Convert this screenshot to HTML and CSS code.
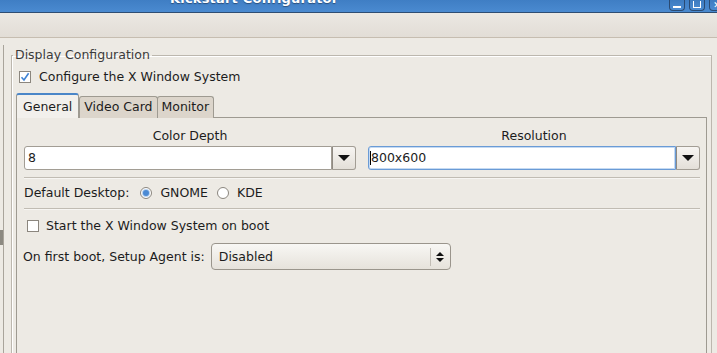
FILE: index.html
```html
<!DOCTYPE html>
<html lang="en">
<head>
  <meta charset="UTF-8">
  <title>Kickstart Configurator</title>
  <link rel="stylesheet" href="styles.css">
</head>
<body>
  <div class="titlebar">
    <span class="title">Kickstart Configurator</span>
    <div class="wm-buttons">
      <span class="wm-btn"><span class="wm-min"></span></span>
      <span class="wm-btn"><span class="wm-max"></span></span>
      <span class="wm-btn"><span class="wm-close">&#x2715;</span></span>
    </div>
  </div>
  <div class="toolbar"></div>

  <div class="main">
    <div class="sidepane"><div class="thumb"></div></div>

    <fieldset class="frame">
      <legend>Display Configuration</legend>

      <label class="check first">
        <span class="box">
          <svg width="10" height="10" viewBox="0 0 10 10"><path d="M1.5 5.2 L4 8 L8.6 1.2" fill="none" stroke="#3f83d4" stroke-width="1.6"/></svg>
        </span>
        Configure the X Window System
      </label>

      <div class="notebook">
        <div class="tabs">
          <div class="tab active">General</div>
          <div class="tab">Video Card</div>
          <div class="tab">Monitor</div>
        </div>

        <div class="page">
          <div class="combo-row">
            <div class="field">
              <div class="field-label">Color Depth</div>
              <div class="combo">
                <span class="combo-entry">8</span>
                <span class="combo-btn"><span class="arrow-down"></span></span>
              </div>
            </div>
            <div class="field">
              <div class="field-label">Resolution</div>
              <div class="combo focused">
                <span class="combo-entry"><span class="caret"></span>800x600</span>
                <span class="combo-btn"><span class="arrow-down"></span></span>
              </div>
            </div>
          </div>

          <div class="sep"></div>

          <div class="desktop-row">
            <span>Default Desktop:</span>
            <label class="radio"><span class="dot on"></span>GNOME</label>
            <label class="radio"><span class="dot"></span>KDE</label>
          </div>

          <div class="sep"></div>

          <label class="check boot">
            <span class="box"></span>
            Start the X Window System on boot
          </label>

          <div class="agent-row">
            <span>On first boot, Setup Agent is:</span>
            <div class="select">
              <span class="select-text">Disabled</span>
              <span class="select-arrows">
                <span class="arrow-up"></span>
                <span class="arrow-down small"></span>
              </span>
            </div>
          </div>
        </div>
      </div>
    </fieldset>
  </div>
</body>
</html>
```

FILE: styles.css
```css
* { box-sizing: border-box; }
html, body { height: 100%; }
body {
  margin: 0;
  overflow: hidden;
  background: #edeae4;
  color: #1c1c1c;
  font-family: "DejaVu Sans", "Liberation Sans", sans-serif;
  font-size: 12.5px;
  line-height: 16px;
  display: flex;
  flex-direction: column;
}

/* window chrome */
.titlebar {
  height: 13px;
  flex: none;
  display: flex;
  align-items: flex-start;
  padding-left: 170px;
  background: linear-gradient(to bottom, #3f7ec4, #4a8ad0);
  border-bottom: 1px solid #2d4d73;
  overflow: hidden;
}
.title {
  margin-top: -9px;
  font-weight: bold;
  font-size: 13px;
  color: #fff;
  text-shadow: 0 1px 1px #2a4f7c;
  letter-spacing: 0.2px;
}
.wm-buttons {
  margin-left: auto;
  margin-right: -8px;
  display: flex;
  gap: 4px;
}
.wm-btn {
  width: 16px; height: 11px;
  border: 1px solid #2a4a72;
  border-top: none;
  border-radius: 0 0 4px 4px;
  background: linear-gradient(to bottom, #3d7bc0, #4b8bd1);
  display: flex; align-items: center; justify-content: center;
  color: #fff;
}
.wm-min { width: 8px; height: 2px; background: #fff; margin-top: 3px; }
.wm-max { width: 8px; height: 7px; border: 1px solid #fff; border-top: none; margin-top: -2px; }
.wm-close { font-size: 9px; line-height: 9px; font-weight: bold; }

.toolbar {
  height: 25px;
  flex: none;
  background: linear-gradient(to bottom, #ebe8e3, #e2ddd6);
  border-bottom: 1px solid #c6bdb0;
}

.main {
  flex: 1;
  display: flex;
  align-items: stretch;
  min-height: 0;
}
.sidepane {
  width: 4px;
  margin-top: 7px;
  margin-right: 7px;
  border-right: 1px solid #a9a49b;
}
.thumb {
  margin-top: 185px;
  height: 15px;
  width: 3px;
  background: #8c8981;
}

/* frame */
.frame {
  flex: 1;
  margin: 9px 5px -20px 0;
  padding: 0 4px;
  border: 1px solid #bcb7ae;
  box-shadow: inset 1px 1px 0 #fff;
  min-width: 0;
  display: flex;
  flex-direction: column;
}
.frame legend {
  padding: 0 2px;
  margin-left: -3px;
  color: #3b3b3b;
}

.check {
  display: flex;
  align-items: center;
  gap: 7px;
}
.check.first { margin: 6px 0 0 3px; gap: 8px; }
.box {
  width: 12px; height: 12px;
  border: 1px solid #8b867e;
  background: #fff;
  display: flex; align-items: center; justify-content: center;
}

/* notebook */
.notebook {
  margin-top: 8px;
  flex: 1;
  display: flex;
  flex-direction: column;
}
.tabs {
  display: flex;
  align-items: flex-end;
  position: relative;
  z-index: 1;
  margin-bottom: -1px;
}
.tab {
  height: 22px;
  padding: 2px 4px 0 4px;
  background: #dcd5cb;
  border: 1px solid #9e9a91;
  border-bottom: none;
  border-radius: 3px 3px 0 0;
  margin-right: -1px;
}
.tab.active {
  height: 25px;
  padding: 4px 6px 0 6px;
  background: #f2f0ec;
  border-top: 2px solid #4a86c8;
  margin-right: 0;
}
.page {
  flex: 1;
  background: #edeae4;
  border: 1px solid #9e9a91;
  padding: 10px 6px 0 7px;
}

.combo-row {
  display: flex;
  gap: 12px;
}
.field { flex: 1; }
.field-label {
  text-align: center;
  margin-bottom: 2px;
}
.combo {
  display: flex;
  height: 24px;
}
.combo-entry {
  flex: 1;
  background: #fff;
  border: 1px solid #a29d94;
  border-radius: 3px 0 0 3px;
  padding: 3px 3px;
  display: flex;
  align-items: center;
}
.combo.focused .combo-entry {
  border-color: #6a9bd6;
  box-shadow: inset 0 0 0 1px #c5daf2;
  padding-left: 1px;
}
.caret {
  width: 1px; height: 14px;
  background: #000;
}
.combo-btn {
  width: 24px;
  border: 1px solid #a29d94;
  border-left: 1px solid #8f8a82;
  border-radius: 0 3px 3px 0;
  background: linear-gradient(to bottom, #f7f5f2, #e3dfd8);
  display: flex; align-items: center; justify-content: center;
}
.arrow-down {
  width: 0; height: 0;
  border-left: 6px solid transparent;
  border-right: 6px solid transparent;
  border-top: 6px solid #111;
}
.arrow-down.small { border-left-width: 4px; border-right-width: 4px; border-top-width: 4px; }
.arrow-up {
  width: 0; height: 0;
  border-left: 4px solid transparent;
  border-right: 4px solid transparent;
  border-bottom: 4px solid #111;
}

.sep {
  border-top: 1px solid #c1bcb3;
  border-bottom: 1px solid #f7f5f2;
  margin: 7px 0 0;
}

.desktop-row {
  display: flex;
  align-items: center;
  gap: 11px;
  margin: 6px 0 7px;
}
.radio {
  display: flex;
  align-items: center;
  gap: 8px;
}
.desktop-row .radio + .radio { margin-left: -2px; }
.dot {
  width: 12px; height: 12px;
  border-radius: 50%;
  border: 1px solid #8b867e;
  background: #fff;
  display: flex; align-items: center; justify-content: center;
}
.dot.on::after {
  content: '';
  width: 6px; height: 6px;
  border-radius: 50%;
  background: #4b8ad4;
  box-shadow: 0 0 0 1px #b8d2f0;
}

.check.boot { margin: 8px 0 0 3px; }

.agent-row {
  display: flex;
  align-items: center;
  gap: 6px;
  margin-top: 9px;
  margin-left: -1px;
}
.select {
  width: 240px;
  height: 27px;
  border: 1px solid #9a958c;
  border-radius: 4px;
  background: linear-gradient(to bottom, #f8f7f4, #e6e2db);
  display: flex;
  align-items: center;
  padding-left: 7px;
}
.select-text { flex: 1; }
.select-arrows {
  width: 20px;
  height: 18px;
  border-left: 1px solid #c2bdb5;
  display: flex;
  flex-direction: column;
  align-items: center;
  justify-content: center;
  gap: 2px;
}
```
